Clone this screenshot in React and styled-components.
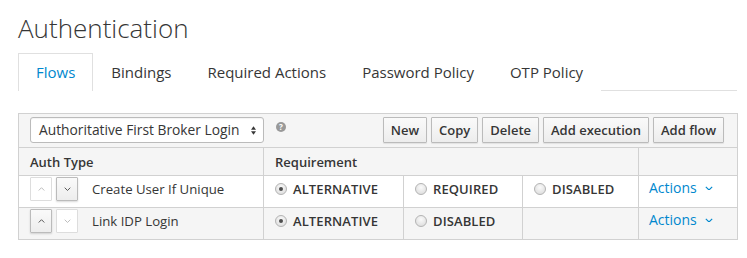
import React from 'react'
import styled, { createGlobalStyle } from 'styled-components'

const GlobalStyle = createGlobalStyle`
    body {
        margin: 0;
        background: #fff;
        font-family: "Open Sans", "Liberation Sans", sans-serif;
        color: #363636;
    }
`

const Page = styled.div`
    padding: 10px 10px 0 18px;
`

const Heading = styled.h1`
    margin: 0;
    font-size: 26px;
    font-weight: 300;
    line-height: 36px;
    color: #363636;
`

const Tabs = styled.ul`
    display: flex;
    list-style: none;
    margin: 7px 0 0;
    padding: 0;
    border-bottom: 1px solid #e0e0e0;
`

const Tab = styled.li`
    height: 36px;
    padding: 0 17px 1px;
    display: flex;
    align-items: center;
    font-size: 15px;
    color: ${({ $active }) => ($active ? '#0088ce' : '#363636')};
    border: 1px solid ${({ $active }) => ($active ? '#e0e0e0' : 'transparent')};
    border-bottom: none;
    margin-bottom: -1px;
    background: #fff;
`

const Table = styled.table`
    margin-top: 22px;
    width: 719px;
    border-collapse: collapse;
    border: 1px solid #d1d1d1;
    font-size: 13px;
    table-layout: fixed;
`

const Cell = styled.td`
    border: 1px solid #d1d1d1;
    padding: ${({ $pad }) => $pad || '5px 10px 0'};
    height: 32px;
    box-sizing: border-box;
    vertical-align: top;
    line-height: 20px;
`

const HeadCell = styled.th`
    border: 1px solid #d1d1d1;
    padding: 0 11px;
    height: 28px;
    box-sizing: border-box;
    text-align: left;
    font-weight: 600;
    font-size: 13px;
    background: #f5f5f5;
`

const Row = styled.tr`
    background: ${({ $striped }) => ($striped ? '#f5f5f5' : '#fff')};
`

const Toolbar = styled.div`
    display: flex;
    align-items: center;
    padding: 3px 13px 4px 11px;
    background: #f5f5f5;
`

const Select = styled.div`
    width: 234px;
    height: 26px;
    box-sizing: border-box;
    border: 1px solid #bbb;
    border-radius: 3px;
    background: #fff;
    display: flex;
    align-items: center;
    justify-content: space-between;
    padding: 0 7px 0 8px;
    font-size: 13.8px;
    box-shadow: inset 0 1px 1px rgba(3, 3, 3, 0.05);
`

const Help = styled.span`
    width: 10px;
    height: 10px;
    margin: -6px 0 0 12px;
    border-radius: 50%;
    background: #999;
    color: #fff;
    font-size: 8px;
    font-weight: 700;
    line-height: 10px;
    text-align: center;
`

const Buttons = styled.div`
    margin-left: auto;
    display: flex;
    gap: 4px;
`

const Button = styled.button`
    height: 26px;
    padding: 0 7px;
    font-family: inherit;
    font-size: 13px;
    font-weight: 600;
    color: #363636;
    border: 1px solid #bbb;
    border-radius: 1px;
    background: linear-gradient(#fafafa, #ededed);
    box-shadow: 0 1px 1px rgba(3, 3, 3, 0.08);
`

const MoveGroup = styled.div`
    display: inline-flex;
    gap: 4px;
    margin-right: 14px;
    vertical-align: top;
`

const MoveButton = styled.button`
    width: 22px;
    height: 24px;
    padding: 0;
    display: flex;
    align-items: center;
    justify-content: center;
    border: 1px solid ${({ disabled }) => (disabled ? '#ddd' : '#bbb')};
    border-radius: 1px;
    background: ${({ disabled }) => (disabled ? '#fff' : 'linear-gradient(#fafafa, #ededed)')};
    box-shadow: ${({ disabled }) => (disabled ? 'none' : '0 1px 2px rgba(3, 3, 3, 0.15)')};
    color: ${({ disabled }) => (disabled ? '#bbb' : '#555')};
`

const NameCell = styled(Cell)`
    white-space: nowrap;
`

const Name = styled.span`
    display: inline-block;
    padding-top: 2px;
    font-size: 13.2px;
`

const Choice = styled.label`
    display: flex;
    align-items: center;
    gap: 6px;
    font-weight: 600;
    letter-spacing: 0.1px;
`

const Radio = styled.span`
    width: 12px;
    height: 12px;
    box-sizing: border-box;
    border-radius: 50%;
    border: 1px solid #b4b4b4;
    background: radial-gradient(circle at 50% 35%, #fafafa, #d8d8d8);
    display: flex;
    align-items: center;
    justify-content: center;
    &::after {
        content: '';
        width: 4px;
        height: 4px;
        border-radius: 50%;
        background: ${({ $checked }) => ($checked ? '#4d4d4d' : 'transparent')};
    }
`

const Actions = styled.span`
    color: #0088ce;
    font-size: 14px;
    display: inline-flex;
    align-items: center;
    gap: 8px;
`

const Chevron = ({ up, size = 7 }) => (
  <svg width={size} height={size * 0.6} viewBox="0 0 10 6">
    <polyline
      points={up ? '1,5 5,1 9,5' : '1,1 5,5 9,1'}
      fill="none"
      stroke="currentColor"
      strokeWidth="1.4"
    />
  </svg>
)

const SortIcon = () => (
  <svg width="5" height="9" viewBox="0 0 6 10">
    <polygon points="0,4 3,0 6,4" fill="#363636" />
    <polygon points="0,6 3,10 6,6" fill="#363636" />
  </svg>
)

const executions = [
  {
    name: 'Create User If Unique',
    upDisabled: true,
    downDisabled: false,
    choices: [
      { label: 'ALTERNATIVE', checked: true },
      { label: 'REQUIRED' },
      { label: 'DISABLED' },
    ],
  },
  {
    name: 'Link IDP Login',
    upDisabled: false,
    downDisabled: true,
    choices: [{ label: 'ALTERNATIVE', checked: true }, { label: 'DISABLED' }],
  },
]

const App = () => {
  return (
    <Page>
      <GlobalStyle />
      <Heading>Authentication</Heading>
      <Tabs>
        <Tab $active>Flows</Tab>
        <Tab>Bindings</Tab>
        <Tab>Required Actions</Tab>
        <Tab>Password Policy</Tab>
        <Tab>OTP Policy</Tab>
      </Tabs>
      <Table>
        <colgroup>
          <col style={{ width: 245 }} />
          <col style={{ width: 140 }} />
          <col style={{ width: 119 }} />
          <col style={{ width: 116 }} />
          <col style={{ width: 99 }} />
        </colgroup>
        <thead>
          <tr>
            <Cell colSpan={5} $pad="0">
              <Toolbar>
                <Select>
                  Authoritative First Broker Login
                  <SortIcon />
                </Select>
                <Help>?</Help>
                <Buttons>
                  <Button>New</Button>
                  <Button>Copy</Button>
                  <Button>Delete</Button>
                  <Button>Add execution</Button>
                  <Button>Add flow</Button>
                </Buttons>
              </Toolbar>
            </Cell>
          </tr>
          <tr>
            <HeadCell>Auth Type</HeadCell>
            <HeadCell colSpan={3}>Requirement</HeadCell>
            <HeadCell />
          </tr>
        </thead>
        <tbody>
          {executions.map((ex, i) => (
            <Row key={ex.name} $striped={i % 2 === 1}>
              <NameCell $pad="1px 11px 0">
                <MoveGroup>
                  <MoveButton disabled={ex.upDisabled}>
                    <Chevron up />
                  </MoveButton>
                  <MoveButton disabled={ex.downDisabled}>
                    <Chevron />
                  </MoveButton>
                </MoveGroup>
                <Name>{ex.name}</Name>
              </NameCell>
              {[0, 1, 2].map((c) => (
                <Cell key={c} $pad="3px 11px 0">
                  {ex.choices[c] && (
                    <Choice>
                      <Radio $checked={ex.choices[c].checked} />
                      {ex.choices[c].label}
                    </Choice>
                  )}
                </Cell>
              ))}
              <Cell $pad="2px 10px 0">
                <Actions>
                  Actions <Chevron size={8} />
                </Actions>
              </Cell>
            </Row>
          ))}
        </tbody>
      </Table>
    </Page>
  )
}

export default App
